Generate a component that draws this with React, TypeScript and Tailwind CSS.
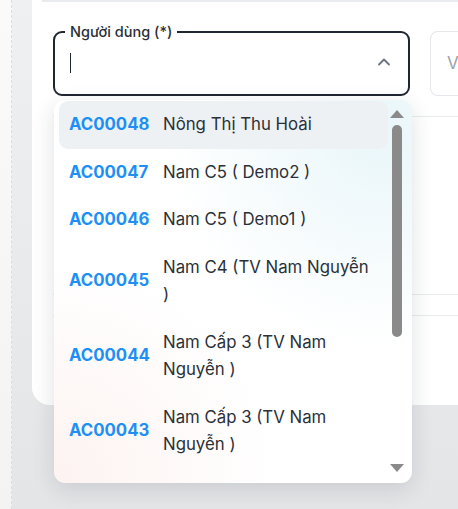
import { ChevronUp } from "lucide-react";

type Option = { code: string; name: string; active?: boolean };

const options: Option[] = [
  { code: "AC00048", name: "Nông Thị Thu Hoài", active: true },
  { code: "AC00047", name: "Nam C5 ( Demo2 )" },
  { code: "AC00046", name: "Nam C5 ( Demo1 )" },
  { code: "AC00045", name: "Nam C4 (TV Nam Nguyễn )" },
  { code: "AC00044", name: "Nam Cấp 3 (TV Nam Nguyễn )" },
  { code: "AC00043", name: "Nam Cấp 3 (TV Nam Nguyễn )" },
];

// Dropdown danh sách người dùng
function UserDropdown() {
  return (
    <div className="absolute left-[-1px] top-[67px] z-20 flex h-[383px] w-[358px] rounded-[11px] bg-white bg-[radial-gradient(circle_at_92%_8%,#e9f6fa_0%,rgba(255,255,255,0)_45%),radial-gradient(circle_at_0%_100%,#fdf3f1_0%,rgba(255,255,255,0)_42%)] shadow-[0_6px_22px_rgba(30,40,60,0.14)]">
      <div className="flex flex-1 flex-col overflow-hidden pl-[5px] pt-[1px]">
        {options.map((o) => (
          <div
            key={o.code}
            className={`flex items-center rounded-[9px] py-[10px] pl-[10px] pr-[14px] ${o.active ? "bg-[#eef1f4]" : ""}`}
          >
            <span className="w-[94px] shrink-0 text-[16.8px] font-bold leading-[27.5px] text-[#1e90f5]">{o.code}</span>
            <span className="text-[16.8px] leading-[27.5px] text-[#2b3038]">{o.name}</span>
          </div>
        ))}
      </div>
      <div className="flex w-[24px] shrink-0 flex-col items-center pr-[6px] pt-[10px]">
        <div className="h-0 w-0 border-x-[7px] border-b-[8px] border-x-transparent border-b-[#8a8a8a]" />
        <div className="mt-[7px] h-[212px] w-[10px] rounded-full bg-[#8a8a8a]" />
        <div className="mt-auto mb-[11px] h-0 w-0 border-x-[7px] border-t-[8px] border-x-transparent border-t-[#8a8a8a]" />
      </div>
    </div>
  );
}

export default function App() {
  return (
    <div className="flex h-[509px] w-full overflow-hidden bg-linear-to-b from-[#eff0f2] to-[#e4e5e7] font-['Inter',sans-serif]">
      <div className="w-[12px] shrink-0 border-r border-dashed border-[#dcdde0] bg-linear-to-b from-[#fafafa] to-[#f3f3f3]" />
      <div className="w-[20px] shrink-0" />
      <div className="flex h-[405px] min-w-0 flex-1 flex-col rounded-bl-[18px] bg-white">
        <div className="ml-[10px] h-[2px] bg-[#e8eaed]" />
        <div className="flex gap-[20px] pl-[21px] pt-[29px]">
          <div className="relative h-[65px] w-[357px] shrink-0 rounded-[9px] border-2 border-[#1f2630]">
            <span className="absolute left-[10px] top-[-11px] bg-white px-[5px] text-[14.5px] font-medium leading-[20px] text-[#2a2f37]">
              Người dùng (*)
            </span>
            <div className="ml-[15px] mt-[20px] h-[20px] w-px bg-[#1f2630]" />
            <ChevronUp className="absolute right-[14px] top-[19px] h-[20px] w-[20px] text-[#6b7280]" strokeWidth={2.2} />
            <UserDropdown />
          </div>
          <div className="flex h-[65px] min-w-[120px] flex-1 items-center whitespace-nowrap rounded-l-[8px] border border-r-0 border-[#e5e7eb] pl-[16px] text-[17px] text-[#9ca3af]">
            Vai trò
          </div>
        </div>
        <div className="ml-[21px] mt-[20px] h-[178px] border-t border-[#e9ebee]" />
        <div className="ml-[21px] h-[21px] border-t border-[#e9ebee]" />
        <div className="ml-[21px] border-t border-[#e9ebee]" />
      </div>
    </div>
  );
}
